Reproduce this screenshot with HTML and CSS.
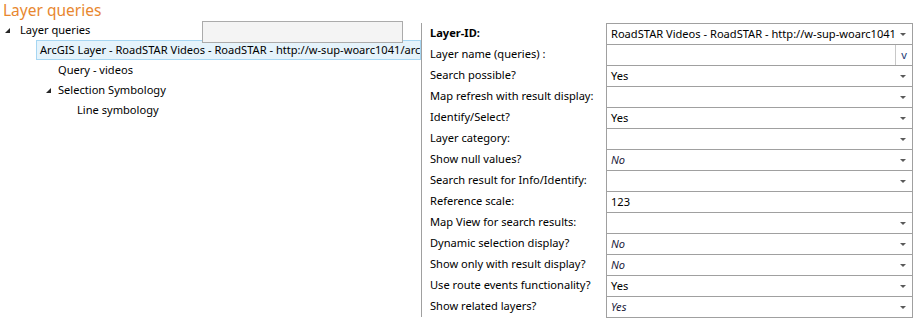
FILE: index.html
```html
<!DOCTYPE html>
<html lang="en">
<head>
    <meta charset="UTF-8">
    <title>Layer queries</title>
    <link rel="stylesheet" href="styles.css">
</head>
<body>
    <div class="title">Layer queries</div>

    <div class="main">
        <!-- Tree -->
        <div class="tree">
            <div class="node level0"><span class="expander"></span>Layer queries</div>
            <div class="node level1 selected"><span class="expander"></span>ArcGIS Layer - RoadSTAR Videos - RoadSTAR - http://w-sup-woarc1041/arc</div>
            <div class="node level2">Query - videos</div>
            <div class="node level2 has-children"><span class="expander"></span>Selection Symbology</div>
            <div class="node level3">Line symbology</div>
            <div class="edit-box"></div>
        </div>

        <!-- Property grid -->
        <div class="props">
            <div class="label bold">Layer-ID:</div>
            <div class="value combo">RoadSTAR Videos - RoadSTAR - http://w-sup-woarc1041<span class="arrow"></span></div>

            <div class="label">Layer name (queries) :</div>
            <div class="value text-button"><span class="fill"></span><span class="btn">v</span></div>

            <div class="label">Search possible?</div>
            <div class="value combo">Yes<span class="arrow"></span></div>

            <div class="label">Map refresh with result display:</div>
            <div class="value combo"><span class="arrow"></span></div>

            <div class="label">Identify/Select?</div>
            <div class="value combo">Yes<span class="arrow"></span></div>

            <div class="label">Layer category:</div>
            <div class="value combo"><span class="arrow"></span></div>

            <div class="label">Show null values?</div>
            <div class="value combo default">No<span class="arrow"></span></div>

            <div class="label">Search result for Info/Identify:</div>
            <div class="value combo"><span class="arrow"></span></div>

            <div class="label">Reference scale:</div>
            <div class="value">123</div>

            <div class="label">Map View for search results:</div>
            <div class="value combo"><span class="arrow"></span></div>

            <div class="label">Dynamic selection display?</div>
            <div class="value combo default">No<span class="arrow"></span></div>

            <div class="label">Show only with result display?</div>
            <div class="value combo default">No<span class="arrow"></span></div>

            <div class="label">Use route events functionality?</div>
            <div class="value combo">Yes<span class="arrow"></span></div>

            <div class="label">Show related layers?</div>
            <div class="value combo default last">Yes<span class="arrow"></span></div>
        </div>
    </div>
</body>
</html>
```

FILE: styles.css
```css
* {
    margin: 0;
    padding: 0;
    box-sizing: border-box;
}

body {
    font-family: "Noto Sans", "Open Sans", sans-serif;
    font-size: 11.1px;
    color: #000;
    background: #fff;
    width: 914px;
    height: 321px;
    overflow: hidden;
}

/* Header */
.title {
    height: 21px;
    padding-left: 3px;
    font-size: 15.5px;
    line-height: 21px;
    color: #e8872f;
}

.main {
    display: flex;
}

/* Tree */
.tree {
    width: 421px;
    margin-top: -1px;
    position: relative;
}

.node {
    height: 20px;
    line-height: 18px;
    display: flex;
    align-items: center;
    white-space: nowrap;
    overflow: hidden;
    border: 1px solid transparent;
}

.level0 { padding-left: 4px; }
.level2 { padding-left: 57px; }
.level2.has-children { padding-left: 45px; }
.level3 { padding-left: 76px; }

.selected {
    margin-left: 36px;
    padding-left: 3px;
    background: #e5f3fb;
    border-color: #a6d6f2;
}

.level1 .expander {
    margin-left: -15px;
    margin-right: 10px;
}

.has-children .expander {
    margin-right: 7px;
}

.expander {
    display: inline-block;
    width: 0;
    height: 0;
    margin-right: 10px;
    border-left: 5px solid transparent;
    border-bottom: 5px solid #262626;
}

.edit-box {
    position: absolute;
    left: 202px;
    top: 1px;
    width: 201px;
    height: 22px;
    background: #f4f4f4;
    border: 1px solid #ababab;
}

/* Property grid */
.props {
    flex: 1;
    margin-top: 2px;
    border-left: 1px solid #a0a0a0;
    display: grid;
    grid-template-columns: 184px 307px;
    grid-auto-rows: 21px;
}

.label {
    padding-left: 8px;
    line-height: 20px;
    white-space: nowrap;
}

.bold {
    font-weight: bold;
}

.value {
    position: relative;
    border: 1px solid #a0a0a0;
    border-bottom: none;
    padding-left: 4px;
    line-height: 19px;
    white-space: nowrap;
    overflow: hidden;
}

.value.last {
    height: 22px;
    border-bottom: 1px solid #a0a0a0;
}

.default {
    font-style: italic;
    color: #1b1b3a;
}

.arrow {
    position: absolute;
    right: 6px;
    top: 9px;
    width: 0;
    height: 0;
    border-left: 3px solid transparent;
    border-right: 3px solid transparent;
    border-top: 3px solid #5a5a5a;
}

.text-button {
    display: flex;
    padding-left: 0;
}

.text-button .fill {
    flex: 1;
}

.text-button .btn {
    width: 17px;
    border-left: 1px solid #c8c8c8;
    text-align: center;
    color: #1e3a74;
}
```
